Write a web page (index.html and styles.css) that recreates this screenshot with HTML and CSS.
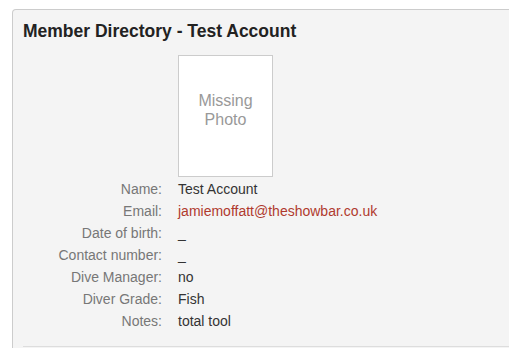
FILE: index.html
```html
<!DOCTYPE html>
<html lang="en">
<head>
    <meta charset="UTF-8">
    <meta name="viewport" content="width=device-width, initial-scale=1.0">
    <title>Member Directory</title>
    <link rel="stylesheet" href="styles.css">
</head>
<body>
    <div class="panel">
        <h2>Member Directory - Test Account</h2>
        <div class="profile">
            <div class="label"></div>
            <div class="value"><div class="photo">Missing<br>Photo</div></div>

            <div class="label">Name:</div>
            <div class="value">Test Account</div>

            <div class="label">Email:</div>
            <div class="value"><a href="#">jamiemoffatt@theshowbar.co.uk</a></div>

            <div class="label">Date of birth:</div>
            <div class="value">_</div>

            <div class="label">Contact number:</div>
            <div class="value">_</div>

            <div class="label">Dive Manager:</div>
            <div class="value">no</div>

            <div class="label">Diver Grade:</div>
            <div class="value">Fish</div>

            <div class="label">Notes:</div>
            <div class="value">total tool</div>
        </div>
        <div class="footer-line"></div>
    </div>
</body>
</html>
```

FILE: styles.css
```css
html, body {
    height: 349px;
    overflow: hidden;
}
body {
    font-family: Arial, "Liberation Sans", sans-serif;
    margin: 0;
    padding: 9px 0 0 12px;
    box-sizing: border-box;
    background-color: #ffffff;
    color: #333;
}
.panel {
    width: 494px;
    height: 338px;
    overflow: hidden;
    background-color: #f4f4f4;
    border: 1px solid #cccccc;
    border-bottom: none;
    border-radius: 4px 4px 0 0;
    padding: 0 0 0 10px;
}
.panel h2 {
    font-size: 17.5px;
    font-weight: bold;
    color: #222;
    margin: 0;
    padding-top: 11px;
    line-height: 20px;
}
.profile {
    display: grid;
    grid-template-columns: 139px auto;
    column-gap: 16px;
    margin-top: 14px;
    font-size: 14px;
    line-height: 22px;
}
.label {
    text-align: right;
    color: #777;
}
.value {
    color: #333;
}
.value a {
    color: #b03a2e;
    text-decoration: none;
}
.photo {
    width: 93px;
    height: 85px;
    padding-top: 35px;
    border: 1px solid #cccccc;
    background-color: #ffffff;
    color: #999;
    font-size: 16px;
    line-height: 19px;
    text-align: center;
}
.profile .value:nth-child(2) {
    margin-bottom: 1px;
}
.footer-line {
    margin-top: 14px;
    border-top: 1px solid #dddddd;
}
```
